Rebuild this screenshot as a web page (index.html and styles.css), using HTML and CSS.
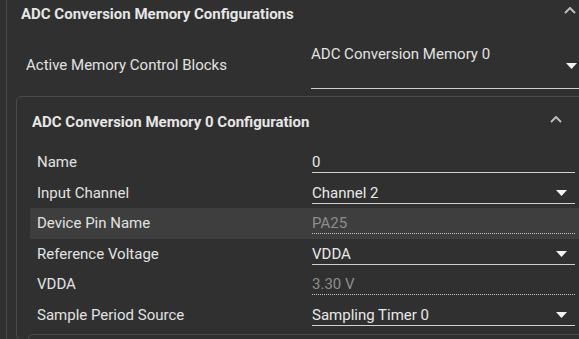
FILE: index.html
```html
<!DOCTYPE html>
<html>
<head>
    <title>ADC Conversion Memory</title>
    <link rel="stylesheet" href="styles.css">
</head>
<body>
    <div class="outer">
        <!-- Outer section -->
        <div class="outer-head">
            <span class="title">ADC Conversion Memory Configurations</span>
            <svg class="chevron" width="12" height="7" viewBox="0 0 12 7"><polyline points="1,6 6,1 11,6" /></svg>
        </div>

        <div class="mem-row">
            <div class="mem-label">Active Memory Control Blocks</div>
            <div class="mem-select">
                <span class="mem-value">ADC Conversion Memory 0</span>
                <svg class="caret" width="11" height="6" viewBox="0 0 11 6"><polygon points="0,0 11,0 5.5,6" /></svg>
            </div>
        </div>

        <!-- Memory 0 block -->
        <div class="inner">
            <div class="inner-head">
                <span class="title">ADC Conversion Memory 0 Configuration</span>
                <svg class="chevron" width="12" height="7" viewBox="0 0 12 7"><polyline points="1,6 6,1 11,6" /></svg>
            </div>

            <div class="rows">
                <div class="row">
                    <div class="label">Name</div>
                    <div class="field">0</div>
                </div>
                <div class="row">
                    <div class="label">Input Channel</div>
                    <div class="field">
                        <span>Channel 2</span>
                        <svg class="caret" width="11" height="6" viewBox="0 0 11 6"><polygon points="0,0 11,0 5.5,6" /></svg>
                    </div>
                </div>
                <div class="row active">
                    <div class="label">Device Pin Name</div>
                    <div class="field readonly">PA25</div>
                </div>
                <div class="row">
                    <div class="label">Reference Voltage</div>
                    <div class="field">
                        <span>VDDA</span>
                        <svg class="caret" width="11" height="6" viewBox="0 0 11 6"><polygon points="0,0 11,0 5.5,6" /></svg>
                    </div>
                </div>
                <div class="row">
                    <div class="label">VDDA</div>
                    <div class="field readonly">3.30 V</div>
                </div>
                <div class="row">
                    <div class="label">Sample Period Source</div>
                    <div class="field">
                        <span>Sampling Timer 0</span>
                        <svg class="caret" width="11" height="6" viewBox="0 0 11 6"><polygon points="0,0 11,0 5.5,6" /></svg>
                    </div>
                </div>
            </div>

            <div class="sub-panel"></div>
        </div>
    </div>
</body>
</html>
```

FILE: styles.css
```css
body {
    margin: 0;
    background: #303030;
    font-family: Roboto, 'Liberation Sans', sans-serif;
    font-size: 15px;
    color: #e2e2e2;
    overflow: hidden;
    height: 339px;
}
.outer {
    margin-left: 6px;
    width: 600px;
    border-left: 1px solid #4a4a4a;
}
.title {
    font-weight: bold;
    color: #e6e6e6;
}
.chevron {
    fill: none;
    stroke: #bdbdbd;
    stroke-width: 2;
}
.caret {
    fill: #f2f2f2;
    flex-shrink: 0;
}
.outer-head {
    height: 28px;
    display: flex;
    align-items: center;
    justify-content: space-between;
    padding: 0 31px 0 14px;
}
.outer-head .chevron {
    margin-top: -8px;
}
.mem-row {
    display: flex;
    height: 61px;
}
.mem-label {
    width: 285px;
    padding-left: 19px;
    padding-top: 27px;
    line-height: 20px;
}
.mem-select {
    box-sizing: border-box;
    width: 284px;
    height: 61px;
    display: flex;
    justify-content: space-between;
    align-items: flex-start;
    padding: 16px 18px 0 0;
    line-height: 20px;
    border-bottom: 1px solid #d0d0d0;
}
.mem-select .caret {
    margin-top: 19px;
}
.inner {
    margin: 7px 0 0 9px;
    width: 574px;
    border: 1px solid #4a4a4a;
    border-radius: 5px;
}
.inner-head {
    display: flex;
    align-items: center;
    justify-content: space-between;
    height: 20px;
    padding: 15px 29px 15px 15px;
    line-height: 20px;
}
.inner-head .chevron {
    margin-top: -6px;
}
.rows {
    margin-left: 13px;
}
.row {
    display: flex;
    align-items: flex-start;
    height: 30.6px;
    padding-left: 7px;
}
.row.active {
    background: #3e3e3e;
}
.label {
    width: 275px;
    padding-top: 5px;
    line-height: 20px;
}
.field {
    width: 263px;
    display: flex;
    justify-content: space-between;
    align-items: center;
    padding-top: 5px;
    line-height: 20px;
    border-bottom: 1px solid #cfcfcf;
    color: #e8e8e8;
}
.field .caret {
    margin-right: 8px;
}
.field.readonly {
    color: #8e8e8e;
    border-bottom: 1px dotted #c4c4c4;
}
.sub-panel {
    margin: 3px 0 0 11px;
    height: 4px;
    border-top: 1px solid #4a4a4a;
    border-left: 1px solid #4a4a4a;
    border-radius: 5px 0 0 0;
}
```
